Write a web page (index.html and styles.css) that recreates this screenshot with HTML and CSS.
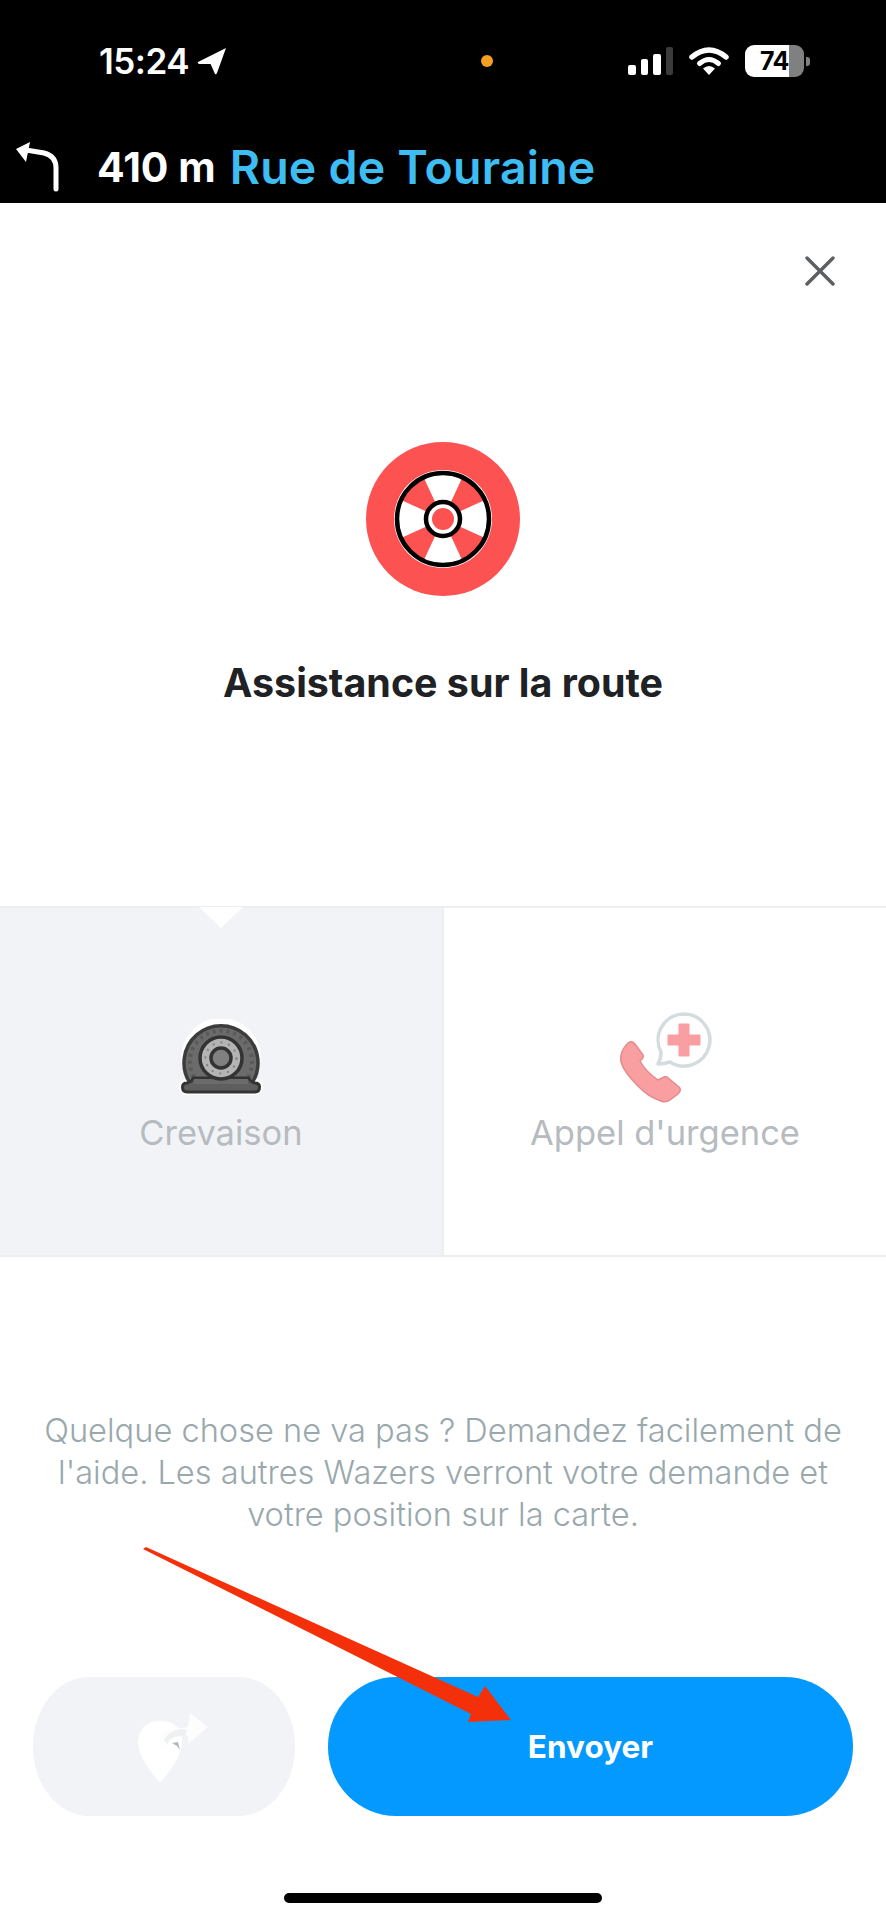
FILE: index.html
```html
<!DOCTYPE html>
<html lang="fr">
<head>
  <meta charset="UTF-8" />
  <meta name="viewport" content="width=device-width, initial-scale=1" />
  <title>Assistance sur la route</title>
  <link rel="stylesheet" href="styles.css">
</head>
<body>
  <div class="phone">
    <div class="topbar">
      <div class="statusbar">
        <div class="status-left">
          <span class="clock">15:24</span>
          <svg class="loc-arrow" viewBox="0 0 30 28"><path d="M29 1 L1 15 Q0 16 2 17 L13 17 Q14 17 14 18 L18 27 Q19 28 20 26 Z" fill="#fff"/></svg>
        </div>
        <span class="orange-dot"></span>
        <div class="status-right">
          <div class="signal">
            <span class="bar bar1"></span>
            <span class="bar bar2"></span>
            <span class="bar bar3"></span>
            <span class="bar bar4"></span>
          </div>
          <svg class="wifi" viewBox="0 0 40 28">
            <path d="M3 10 Q20 -4 37 10" fill="none" stroke="#fff" stroke-width="5.5" stroke-linecap="round"/>
            <path d="M10.5 16.5 Q20 8.5 29.5 16.5" fill="none" stroke="#fff" stroke-width="5" stroke-linecap="round"/>
            <path d="M14 21.5 Q20 16.5 26 21.5 L20 28 Z" fill="#fff"/>
          </svg>
          <div class="battery">
            <div class="battery-body"><span class="battery-level">74</span></div>
            <span class="battery-nub"></span>
          </div>
        </div>
      </div>
      <div class="navbar">
        <svg class="turn-icon" viewBox="0 0 44 50"><path d="M40 47 V26 Q40 14 28 11 L10 8" fill="none" stroke="#fff" stroke-width="5" stroke-linecap="round"/><path d="M14 0 L0 7 L10 20 Z" fill="#fff"/></svg>
        <span class="distance">410 m</span>
        <span class="street">Rue de Touraine</span>
      </div>
    </div>

    <div class="sheet">
      <div class="close-row">
        <svg class="close-icon" viewBox="0 0 30 30"><path d="M2 2 L28 28 M28 2 L2 28" stroke="#5c5f61" stroke-width="3.4" stroke-linecap="round"/></svg>
      </div>

      <div class="hero">
        <svg class="hero-icon" viewBox="0 0 154 154">
          <circle cx="77" cy="77" r="77" fill="#fd5252"/>
          <circle cx="77" cy="77" r="49" fill="#fff"/>
          <path d="M77 77 L57 34 A46 46 0 0 0 35 58 Z M77 77 L97 34 A46 46 0 0 1 119 58 Z M77 77 L35 96 A46 46 0 0 0 57 120 Z M77 77 L119 96 A46 46 0 0 1 97 120 Z" fill="#fd5252"/>
          <circle cx="77" cy="77" r="46" fill="none" stroke="#000" stroke-width="4.5"/>
          <circle cx="77" cy="77" r="17" fill="#fff" stroke="#000" stroke-width="4.5"/>
          <circle cx="77" cy="77" r="11" fill="#fd5252"/>
        </svg>
        <h1 class="hero-title">Assistance sur la route</h1>
      </div>

      <div class="options">
        <div class="option option-active">
          <span class="notch"></span>
          <svg class="tire-icon" viewBox="0 0 84 76">
            <circle cx="42" cy="39" r="40" fill="#fff"/>
            <rect x="0" y="60" width="84" height="16" rx="8" fill="#fff"/>
            <path d="M11 64 A37 37 0 1 1 73 64 Z" fill="#6b6b6b" stroke="#3c3c3c" stroke-width="3.5"/>
            <path d="M15 58 A31 31 0 1 1 69 58" fill="none" stroke="#5a5a5a" stroke-width="4" stroke-dasharray="3 4"/>
            <path d="M3.5 68 Q3.5 64 8 64 Q13 63 14 59 H70 Q71 63 76 64 Q80.5 64 80.5 68 Q80.5 73 76 73 H8 Q3.5 73 3.5 68 Z" fill="#5e5e5e" stroke="#333" stroke-width="3" stroke-linejoin="round"/>
            <path d="M15 60 H69 V65 H15 Z" fill="#6b6b6b"/>
            <circle cx="42" cy="39" r="21" fill="#b4b4b4" stroke="#333" stroke-width="3.5"/>
            <circle cx="42" cy="39" r="15.5" fill="none" stroke="#808080" stroke-width="2" stroke-dasharray="2 6"/>
            <circle cx="42" cy="39" r="10" fill="#808080" stroke="#333" stroke-width="3.5"/>
          </svg>
          <span class="option-label">Crevaison</span>
        </div>
        <div class="option">
          <svg class="call-icon" viewBox="0 0 94 90">
            <path d="M64 2 A26 26 0 1 1 50 50 Q44 52 38 52 Q41 47 41 40 A26 26 0 0 1 64 2 Z" fill="#fff" stroke="#d4dcdf" stroke-width="3.5" stroke-linejoin="round"/>
            <path d="M59 12 H69 V23 H80 V33 H69 V44 H59 V33 H48 V23 H59 Z" fill="#f99fa2" stroke="#f99fa2" stroke-width="1" stroke-linejoin="round"/>
            <path d="M8 31 Q12 28 15 32 L23 43 Q24 46 21 48 L20 49 Q26 60 38 68 L42 66 Q45 64 47 65 L59 75 Q62 78 58 82 L50 88 Q46 91 41 89 Q28 85 17 73 Q4 60 1 50 Q-1 40 8 31 Z" fill="#f99fa2" stroke="#e58a8d" stroke-width="1.5" stroke-linejoin="round"/>
          </svg>
          <span class="option-label">Appel d'urgence</span>
        </div>
      </div>

      <p class="help-text">Quelque chose ne va pas ? Demandez facilement de l'aide. Les autres Wazers verront votre demande et votre position sur la carte.</p>

      <div class="actions">
        <button class="btn btn-share">
          <svg class="share-icon" viewBox="0 0 72 72">
            <path d="M24 9 Q4 9 2 30 Q2 46 24 71 Q46 46 46 30 Q46 9 24 9 Z" fill="#fff"/>
            <path d="M24 36 Q20 26 30 19 L52 15 L54 1 L72 15 L52 32 L52 24 Q34 23 31 33 Z" fill="#fdfdfe"/>
            <path d="M28 28 Q33 17 50 17 L50 24 Q36 22 31 32 Z" fill="#eef0f2"/>
            <path d="M36 31 L42 30 L44 38 L41 34 Z" fill="#b4b7ba"/>
          </svg>
        </button>
        <button class="btn btn-send">Envoyer</button>
      </div>

      <div class="home-bar"></div>
    </div>

    <svg class="annotation" viewBox="0 0 886 1920">
      <path d="M143 1549 L146 1547 L478 1697 L485 1686 L511 1720 L468 1722 L471 1714 Z" fill="#f4300a"/>
    </svg>
  </div>
</body>
</html>
```

FILE: styles.css
```css
* {
  box-sizing: border-box;
}
body {
  margin: 0;
  background-color: #fff;
  font-family: Inter, "Liberation Sans", sans-serif;
}
.phone {
  position: relative;
  width: 886px;
  height: 1920px;
  display: flex;
  flex-direction: column;
  overflow: hidden;
}
.topbar {
  height: 203px;
  background-color: #000;
  color: #fff;
  flex-shrink: 0;
}
.statusbar {
  display: flex;
  align-items: center;
  height: 122px;
  padding: 0 76px 0 99px;
}
.status-left {
  display: flex;
  align-items: center;
  gap: 8px;
  width: 382px;
}
.clock {
  font-size: 35px;
  font-weight: 600;
  letter-spacing: -0.5px;
  line-height: 1;
}
.loc-arrow {
  width: 30px;
  height: 28px;
}
.orange-dot {
  width: 12px;
  height: 12px;
  border-radius: 50%;
  background-color: #f5a021;
}
.status-right {
  display: flex;
  align-items: center;
  gap: 16px;
  margin-left: auto;
}
.signal {
  display: flex;
  align-items: flex-end;
  gap: 5px;
  height: 28px;
}
.bar {
  width: 7.5px;
  border-radius: 2px;
  background-color: #fff;
}
.bar1 { height: 10px; }
.bar2 { height: 16px; }
.bar3 { height: 21px; }
.bar4 { height: 28px; background-color: #3b3b3b; }
.wifi {
  width: 40px;
  height: 28px;
}
.battery {
  display: flex;
  align-items: center;
  gap: 2px;
}
.battery-body {
  width: 59px;
  height: 32px;
  border-radius: 9px;
  background: linear-gradient(to right, #fff 75%, #808080 75%);
  color: #000;
  display: flex;
  align-items: center;
  justify-content: center;
}
.battery-level {
  font-size: 25px;
  font-weight: 700;
  letter-spacing: -0.5px;
}
.battery-nub {
  width: 4px;
  height: 9px;
  border-radius: 0 3px 3px 0;
  background-color: #808080;
}
.navbar {
  display: flex;
  align-items: center;
  height: 81px;
  padding: 8px 0 0 16px;
}
.turn-icon {
  width: 44px;
  height: 50px;
  margin-right: 37px;
}
.distance {
  font-size: 41px;
  font-weight: 700;
  margin-right: 14px;
}
.street {
  font-size: 46.5px;
  font-weight: 600;
  letter-spacing: 0.2px;
  color: #3dbdf2;
}
.sheet {
  flex: 1;
  display: flex;
  flex-direction: column;
}
.close-row {
  display: flex;
  justify-content: flex-end;
  padding: 53px 51px 0 0;
}
.close-icon {
  width: 30px;
  height: 30px;
}
.hero {
  display: flex;
  flex-direction: column;
  align-items: center;
  margin-top: 156px;
}
.hero-icon {
  width: 154px;
  height: 154px;
}
.hero-title {
  margin: 63px 0 0;
  font-size: 39.4px;
  line-height: 48px;
  font-weight: 700;
  color: #202124;
}
.options {
  display: flex;
  height: 351px;
  margin-top: 199px;
  border-top: 2px solid #eceef0;
  border-bottom: 2px solid #eceef0;
}
.option {
  flex: 1;
  position: relative;
  display: flex;
  flex-direction: column;
  align-items: center;
  justify-content: flex-end;
  padding-bottom: 95px;
}
.option-active {
  background-color: #f2f3f7;
  border-right: 2px solid #eceef0;
}
.notch {
  position: absolute;
  top: -1px;
  left: 199px;
  border-left: 22px solid transparent;
  border-right: 22px solid transparent;
  border-top: 21px solid #fff;
}
.tire-icon {
  width: 84px;
  height: 76px;
  margin-bottom: 7px;
}
.call-icon {
  width: 94px;
  height: 90px;
  margin-left: 4px;
  overflow: visible;
}
.option-label {
  height: 54px;
  margin-top: 4px;
  font-size: 34.5px;
  line-height: 54px;
  color: #b6bbc0;
}
.help-text {
  margin: 152px 0 0;
  padding: 0 36px;
  text-align: center;
  font-size: 32.6px;
  line-height: 42px;
  font-weight: 300;
  color: #99a8ac;
}
.actions {
  display: flex;
  gap: 33px;
  padding: 0 33px;
  margin-top: 142px;
}
.btn {
  height: 139px;
  border: none;
  font-family: inherit;
  display: flex;
  align-items: center;
  justify-content: center;
}
.btn-share {
  width: 262px;
  border-radius: 56px / 69px;
  background-color: #f2f3f6;
}
.share-icon {
  width: 72px;
  height: 72px;
  margin-left: 16px;
  margin-top: 2px;
}
.btn-send {
  flex: 1;
  border-radius: 68px / 69px;
  background-color: #0499ff;
  color: #fff;
  font-size: 31.5px;
  font-weight: 700;
}
.home-bar {
  width: 318px;
  height: 10px;
  border-radius: 5px;
  background-color: #000;
  margin: 77px auto 0;
}
.annotation {
  position: absolute;
  top: 0;
  left: 0;
  width: 886px;
  height: 1920px;
  pointer-events: none;
}
```
